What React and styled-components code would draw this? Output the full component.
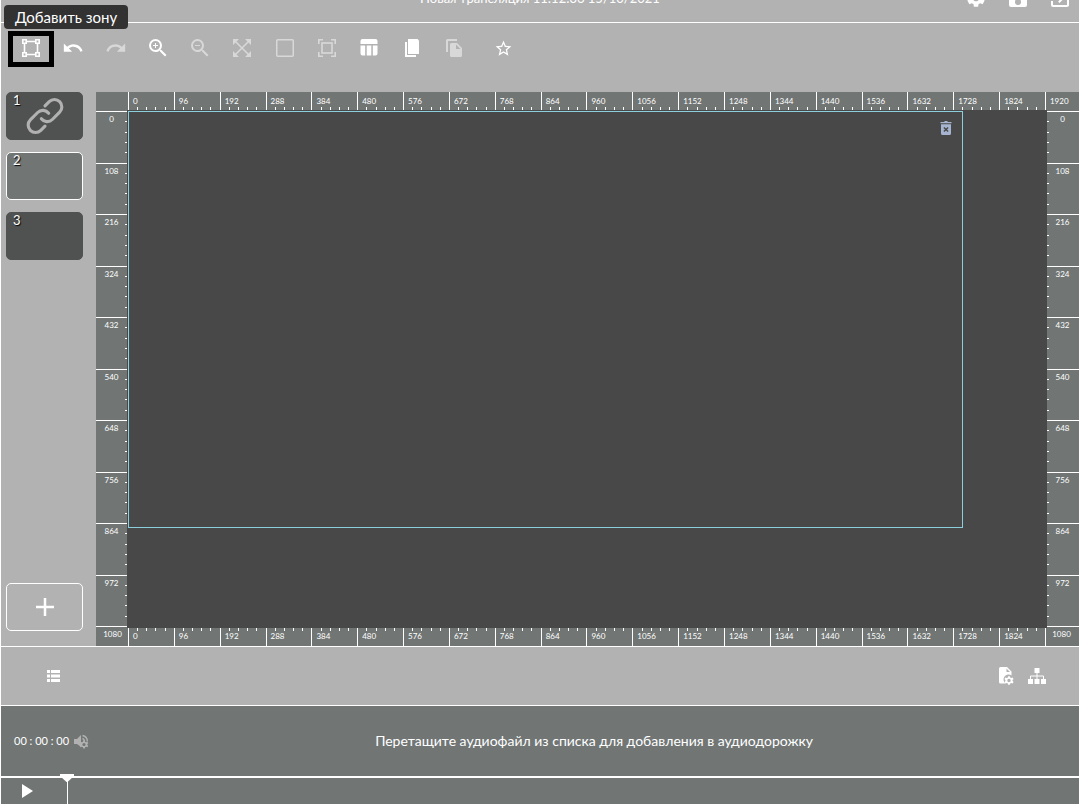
import React from 'react';
import styled, { createGlobalStyle, css } from 'styled-components';
import {
  MdUndo,
  MdRedo,
  MdZoomIn,
  MdZoomOut,
  MdStarOutline,
  MdSettings,
  MdExitToApp,
  MdPlayArrow,
} from 'react-icons/md';

const GlobalStyle = createGlobalStyle`
  * {
    box-sizing: border-box;
  }
  body {
    margin: 0;
    overflow: hidden;
    background: #b2b2b2;
    color: #fff;
    font-family: "Lato", "Liberation Sans", sans-serif;
  }
  button {
    padding: 0;
    border: 0;
    background: none;
    color: inherit;
    font: inherit;
    cursor: pointer;
  }
`;

const Page = styled.div`
  display: flex;
  flex-direction: column;
  height: 100vh;
  border-left: 1px solid #fff;
  overflow: hidden;
`;

const Header = styled.header`
  display: grid;
  grid-template-columns: 1fr auto 1fr;
  align-items: center;
  flex: none;
  height: 49px;
  margin-top: -26px;
  border-bottom: 1px solid #fff;
`;

const Title = styled.h1`
  grid-column: 2;
  margin: 0;
  font-size: 13px;
  line-height: 20px;
  font-weight: 400;
`;

const HeaderActions = styled.div`
  display: flex;
  justify-content: flex-end;
  gap: 18px;
  padding-right: 7px;
`;

const IconButton = styled.button`
  display: flex;
  align-items: center;
  justify-content: center;
  min-width: 24px;
  height: 32px;
  &:disabled {
    opacity: 0.5;
    cursor: default;
  }
  ${p => p.$active && css`
    outline: 5px solid #000;
    outline-offset: -3px;
  `}
`;

const Toolbar = styled.div`
  position: relative;
  display: flex;
  flex: none;
  height: 69px;
  padding: 10px 9px;
`;

const Tools = styled.div`
  display: grid;
  grid-template-columns: repeat(11, 1fr);
  width: 465px;
  margin-right: 7px;
`;

const ToolButton = styled(IconButton)`
  width: 100%;
  padding-bottom: 2px;
`;

const StarButton = styled(IconButton)`
  width: 42px;
  padding-bottom: 2px;
`;

const Tooltip = styled.div`
  position: absolute;
  top: -18px;
  left: 3px;
  z-index: 2;
  padding: 0 11px;
  border-radius: 4px;
  background: #323232;
  font-size: 15px;
  line-height: 24px;
  white-space: nowrap;
`;

const Editor = styled.main`
  display: flex;
  flex: 1;
  min-height: 0;
`;

const Sidebar = styled.aside`
  display: flex;
  flex-direction: column;
  gap: 12px;
  flex: none;
  width: 95px;
  padding: 0 13px 15px 5px;
`;

const Tile = styled.button`
  position: relative;
  display: flex;
  align-items: center;
  justify-content: center;
  width: 77px;
  height: 48px;
  border: 1px solid ${p => (p.$selected ? '#fff' : '#505251')};
  border-radius: 5px;
  background: ${p => (p.$selected ? '#717675' : '#505251')};
`;

const TileNumber = styled.span`
  position: absolute;
  top: 0;
  left: 6px;
  font-size: 13px;
  line-height: 14px;
  text-shadow: 1px 1px 1px #000;
`;

const AddTile = styled(Tile)`
  margin-top: auto;
  border-color: #fff;
  background: none;
`;

const Workspace = styled.section`
  display: grid;
  grid-template-columns: 31px 1fr 32px;
  grid-template-rows: 18px 1fr 18px;
  flex: 1;
  min-width: 0;
  background: #717675;
`;

const Ruler = styled.div`
  display: grid;
  min-width: 0;
  min-height: 0;
  font-size: 8px;
  line-height: 10px;
`;

const HorizontalRuler = styled(Ruler)`
  grid-row: ${p => (p.$bottom ? 3 : 1)};
  grid-column: ${p => (p.$bottom ? '2' : '1 / 4')};
  grid-template-columns: repeat(20, minmax(0, 1fr)) ${p => (p.$bottom ? '2px' : '34px')};
  padding-left: ${p => (p.$bottom ? '1px' : '32px')};
`;

const VerticalRuler = styled(Ruler)`
  grid-row: 2 / 4;
  grid-column: ${p => (p.$right ? 3 : 1)};
  grid-template-rows: repeat(10, minmax(0, 1fr)) 20px;
  padding-top: 1px;
`;

const Column = styled.div`
  display: flex;
  flex-direction: ${p => (p.$bottom ? 'column-reverse' : 'column')};
  justify-content: space-between;
  border-left: 1px solid #fff;
  span {
    padding: ${p => (p.$bottom ? '0 0 5px 4px' : '4px 0 0 4px')};
  }
`;

const Row = styled.div`
  display: flex;
  flex-direction: ${p => (p.$right ? 'row-reverse' : 'row')};
  justify-content: space-between;
  border-top: 1px solid #fff;
  span {
    flex: 1;
    padding: ${p => (p.$right ? '2px 3px 0 0' : '2px 0 0 2px')};
    text-align: center;
  }
`;

const Ticks = styled.div`
  display: flex;
  flex-direction: ${p => (p.$vertical ? 'column' : 'row')};
  justify-content: space-evenly;
  i {
    width: ${p => (p.$vertical ? '2px' : '1px')};
    height: ${p => (p.$vertical ? '1px' : '3px')};
    background: #fff;
  }
`;

const Stage = styled.div`
  position: relative;
  grid-row: 2;
  grid-column: 2;
  background: #484848;
`;

const Zone = styled.div`
  position: absolute;
  top: 1px;
  left: 1px;
  display: flex;
  justify-content: flex-end;
  align-items: flex-start;
  width: 90.8%;
  height: 80.5%;
  padding: 9px 10px;
  border: 1px solid #8bcfdc;
  color: #a5b4d0;
`;

const DeleteButton = styled.button`
  display: flex;
`;

const PanelBar = styled.div`
  display: flex;
  align-items: center;
  justify-content: space-between;
  flex: none;
  height: 60px;
  padding: 0 30px 0 40px;
  border-top: 1px solid #fff;
  border-bottom: 1px solid #fff;
`;

const PanelActions = styled.div`
  display: flex;
  gap: 7px;
`;

const AudioPanel = styled.section`
  display: flex;
  align-items: center;
  flex: none;
  height: 70px;
  padding-left: 13px;
  background: #717675;
`;

const Clock = styled.time`
  font-size: 11px;
  line-height: 16px;
  white-space: pre;
`;

const SoundButton = styled(IconButton)`
  color: #b1b1b1;
`;

const Hint = styled.p`
  flex: 1;
  margin: 0;
  padding-left: 16px;
  text-align: center;
  font-size: 14px;
  line-height: 20px;
`;

const Timeline = styled.footer`
  position: relative;
  display: flex;
  flex: none;
  height: 28px;
  padding-left: 13px;
  border-top: 2px solid #fff;
  background: #717675;
`;

const PlayButton = styled(IconButton)`
  height: 26px;
`;

const Playhead = styled.svg`
  position: absolute;
  top: -4px;
  left: 59px;
`;

const Icon = ({ size = 24, children, ...rest }) => (
  <svg width={size} height={size} viewBox="0 0 24 24" fill="currentColor" aria-hidden="true" {...rest}>
    {children}
  </svg>
);

const ZoneIcon = () => (
  <Icon fill="none" stroke="currentColor" strokeWidth="1.6">
    <path d="M7.500 5.500h9M7.500 18.500h9M5.500 7.500v9M18.500 7.500v9" />
    <path d="M3.800 3.800h3.400v3.400H3.800zM16.800 3.800h3.400v3.400h-3.400zM3.800 16.800h3.400v3.400H3.800zM16.800 16.800h3.400v3.400h-3.400z" />
  </Icon>
);

const ExpandIcon = () => (
  <Icon>
    <path d="M5 5l14 14M19 5L5 19" stroke="currentColor" strokeWidth="1.5" />
    <path d="M3 3h6L3 9zM21 3v6l-6-6zM3 21v-6l6 6zM21 21h-6l6-6z" />
  </Icon>
);

const SquareIcon = () => (
  <Icon fill="none" stroke="currentColor" strokeWidth="1.5">
    <rect x="3.75" y="3.75" width="16.5" height="16.5" rx="1" />
  </Icon>
);

const FitIcon = () => (
  <Icon fill="none" stroke="currentColor" strokeWidth="1.6">
    <path d="M3.800 8V3.800H8M16 3.800h4.200V8M20.200 16v4.200H16M8 20.200H3.800V16" />
    <rect x="7" y="7" width="10" height="10" />
  </Icon>
);

const TableIcon = () => (
  <Icon>
    <path d="M3.500 5a2 2 0 0 1 2-2h13a2 2 0 0 1 2 2v3h-17zM3.500 9.500h4.700v10H5.500a2 2 0 0 1-2-2zM9.700 9.500h4.600v10H9.700zM15.800 9.500h4.700v8a2 2 0 0 1-2 2h-2.700z" />
  </Icon>
);

const PagesIcon = () => (
  <Icon>
    <path d="M8 3h9.500L19 4.500V18H8z" />
    <path d="M5 6h2v13h9v2H5z" />
  </Icon>
);

const PasteIcon = () => (
  <Icon>
    <path d="M15 3H5.500A1.500 1.500 0 0 0 4 4.500V16h2V5h9z" />
    <path fillRule="evenodd" d="M9.500 7H15l5 5v7.500a1.500 1.500 0 0 1-1.500 1.500h-9A1.500 1.500 0 0 1 8 19.500v-11A1.500 1.500 0 0 1 9.500 7zM14 8.500V13h4.500z" />
  </Icon>
);

const SaveIcon = () => (
  <Icon>
    <path fillRule="evenodd" d="M5 3h11l5 5v11a2 2 0 0 1-2 2H5a2 2 0 0 1-2-2V5a2 2 0 0 1 2-2zM5 5v4h10V5zM12 13a3 3 0 1 0 0 6 3 3 0 0 0 0-6z" />
  </Icon>
);

const LinkIcon = () => (
  <Icon size={44} fill="none" stroke="#b1b1b1" strokeWidth="1.7" strokeLinecap="round">
    <path d="M10 13.500a4 4 0 0 0 6 .4l4-4a4 4 0 0 0-5.700-5.700L12 6.500" />
    <path d="M14 10.500a4 4 0 0 0-6-.4l-4 4a4 4 0 0 0 5.700 5.700L12 17.500" />
  </Icon>
);

const PlusIcon = () => (
  <Icon fill="none" stroke="currentColor" strokeWidth="2.5">
    <path d="M12 3v18M3 12h18" />
  </Icon>
);

const TrashIcon = () => (
  <svg width="12" height="14" viewBox="0 0 12 14" fill="currentColor" aria-hidden="true">
    <path d="M0.500 1H4l1-1h2l1 1h3.500v1.300h-11z" />
    <path fillRule="evenodd" d="M1 3.200h10V12.500a1.500 1.500 0 0 1-1.500 1.500h-7A1.500 1.500 0 0 1 1 12.500zM3.400 6.900L5 8.500 3.400 10.100l1 1L6 9.500l1.600 1.600 1-1L7 8.500l1.600-1.600-1-1L6 7.500 4.400 5.900z" />
  </svg>
);

const ListIcon = () => (
  <svg width="13" height="12" viewBox="0 0 13 12" fill="currentColor" aria-hidden="true">
    <path d="M0 0h3v3H0zM4 0h9v3H4zM0 4.500h3v3H0zM4 4.500h9v3H4zM0 9h3v3H0zM4 9h9v3H4z" />
  </svg>
);

const Gear = ({ transform }) => (
  <g transform={transform}>
    <path
      fillRule="evenodd"
      d="M-1-5h2l.4 1.500 1.200.6 1.600-.6 1.200 1.800L4.200-.6v1.200l1.200 1.100-1.200 1.800-1.600-.6-1.200.6L1 5h-2l-.4-1.500-1.200-.6-1.600.6-1.200-1.800 1.200-1.100v-1.200l-1.200-1.100 1.200-1.800 1.600.6 1.200-.6zM0-2a2 2 0 1 0 0 4 2 2 0 0 0 0-4z"
    />
  </g>
);

const FileGearIcon = () => (
  <svg width="16" height="18" viewBox="0 0 16 18" fill="currentColor" aria-hidden="true">
    <path fillRule="evenodd" d="M2.500 0H9l4.500 4.500V8.500A5 5 0 0 0 7.500 16.500h-5A1.500 1.500 0 0 1 1 15V1.500A1.500 1.500 0 0 1 2.500 0zM8.500 1.500V5H12z" />
    <Gear transform="translate(11 13.500) scale(.85)" />
  </svg>
);

const SitemapIcon = () => (
  <svg width="18" height="16" viewBox="0 0 18 16" fill="currentColor" aria-hidden="true">
    <path d="M6.500 0h5v5h-5zM0 11h5v5H0zM6.500 11h5v5h-5zM13 11h5v5h-5z" />
    <path d="M9 5v6M2.500 11V8h13v3" fill="none" stroke="currentColor" />
  </svg>
);

const SoundIcon = () => (
  <svg width="15" height="15" viewBox="0 0 15 15" fill="currentColor" aria-hidden="true">
    <path d="M0 5h3l4-4v12L3 10H0z" />
    <path d="M8.500 1.500a6 6 0 0 1 4.800 6M8.500 4.500a3 3 0 0 1 2 2.500" fill="none" stroke="currentColor" strokeWidth="1.4" />
    <Gear transform="translate(10 10.500) scale(.8)" />
  </svg>
);

const tools = [
  { label: 'Добавить зону', icon: <ZoneIcon />, active: true },
  { label: 'Отменить', icon: <MdUndo size={22} /> },
  { label: 'Повторить', icon: <MdRedo size={22} />, disabled: true },
  { label: 'Увеличить', icon: <MdZoomIn size={24} /> },
  { label: 'Уменьшить', icon: <MdZoomOut size={24} />, disabled: true },
  { label: 'Развернуть', icon: <ExpandIcon />, disabled: true },
  { label: 'Рамка', icon: <SquareIcon />, disabled: true },
  { label: 'Вписать', icon: <FitIcon />, disabled: true },
  { label: 'Шаблоны', icon: <TableIcon /> },
  { label: 'Копировать', icon: <PagesIcon /> },
  { label: 'Вставить', icon: <PasteIcon />, disabled: true },
];

const xMarks = Array.from({ length: 21 }, (_, i) => i * 96);
const yMarks = Array.from({ length: 11 }, (_, i) => i * 108);

const TickMarks = ({ vertical }) => (
  <Ticks $vertical={vertical}>
    <i />
    <i />
    <i />
    <i />
  </Ticks>
);

const XRuler = ({ bottom }) => (
  <HorizontalRuler $bottom={bottom}>
    {xMarks.map(mark => (
      <Column key={mark} $bottom={bottom}>
        {(mark < 1920 || !bottom) && <span>{mark}</span>}
        {mark < 1920 && <TickMarks />}
      </Column>
    ))}
  </HorizontalRuler>
);

const YRuler = ({ right }) => (
  <VerticalRuler $right={right}>
    {yMarks.map(mark => (
      <Row key={mark} $right={right}>
        <span>{mark}</span>
        {mark < 1080 && <TickMarks vertical />}
      </Row>
    ))}
  </VerticalRuler>
);

const App = () => (
  <>
    <GlobalStyle />
    <Page>
      <Header>
        <Title>Новая трансляция 11:12:36 15/10/2021</Title>
        <HeaderActions>
          <IconButton aria-label="Настройки"><MdSettings size={22} /></IconButton>
          <IconButton aria-label="Сохранить"><SaveIcon /></IconButton>
          <IconButton aria-label="Выйти"><MdExitToApp size={24} /></IconButton>
        </HeaderActions>
      </Header>

      <Toolbar>
        <Tools>
          {tools.map(tool => (
            <ToolButton key={tool.label} aria-label={tool.label} disabled={tool.disabled} $active={tool.active}>
              {tool.icon}
            </ToolButton>
          ))}
        </Tools>
        <StarButton aria-label="Избранное"><MdStarOutline size={19} /></StarButton>
        <Tooltip role="tooltip">Добавить зону</Tooltip>
      </Toolbar>

      <Editor>
        <Sidebar>
          <Tile><TileNumber>1</TileNumber><LinkIcon /></Tile>
          <Tile $selected><TileNumber>2</TileNumber></Tile>
          <Tile><TileNumber>3</TileNumber></Tile>
          <AddTile aria-label="Добавить"><PlusIcon /></AddTile>
        </Sidebar>
        <Workspace>
          <XRuler />
          <YRuler />
          <Stage>
            <Zone>
              <DeleteButton aria-label="Удалить зону"><TrashIcon /></DeleteButton>
            </Zone>
          </Stage>
          <YRuler right />
          <XRuler bottom />
        </Workspace>
      </Editor>

      <PanelBar>
        <IconButton aria-label="Список"><ListIcon /></IconButton>
        <PanelActions>
          <IconButton aria-label="Свойства файла"><FileGearIcon /></IconButton>
          <IconButton aria-label="Структура"><SitemapIcon /></IconButton>
        </PanelActions>
      </PanelBar>

      <AudioPanel>
        <Clock>00 : 00 : 00</Clock>
        <SoundButton aria-label="Настройки звука"><SoundIcon /></SoundButton>
        <Hint>Перетащите аудиофайл из списка для добавления в аудиодорожку</Hint>
      </AudioPanel>

      <Timeline>
        <PlayButton aria-label="Воспроизвести"><MdPlayArrow size={24} /></PlayButton>
        <Playhead width="14" height="30" viewBox="0 0 14 30" aria-hidden="true">
          <path d="M0 0h14v2L7.500 8h-1L0 2z" fill="#fff" />
          <path d="M7.500 6v24" stroke="#fff" />
        </Playhead>
      </Timeline>
    </Page>
  </>
);

export default App;
